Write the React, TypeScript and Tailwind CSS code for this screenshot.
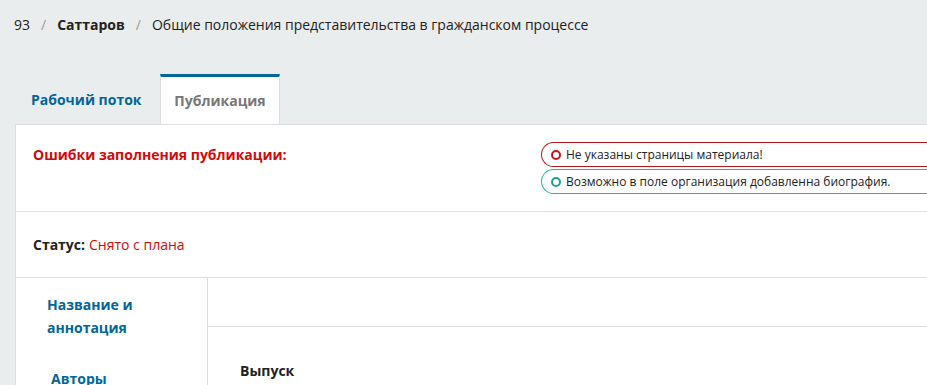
import React from 'react';

const Ring: React.FC<{ color: string }> = ({ color }) => (
  <span className={`inline-block w-[10px] h-[10px] rounded-full border-[2.5px] ${color} shrink-0`} />
);

export default function App() {
  return (
    <div className="min-h-screen overflow-hidden bg-[#eaedee] font-['Open_Sans',sans-serif] text-[14px] text-[#222]">
      {/* breadcrumb */}
      <div className="flex items-center h-[20px] mt-[14px] pl-[14px] whitespace-nowrap">
        <span>93</span>
        <span className="mx-[11px] text-[#999]">/</span>
        <span className="font-bold">Саттаров</span>
        <span className="mx-[11px] text-[#999]">/</span>
        <span>Общие положения представительства в гражданском процессе</span>
      </div>

      {/* tabs */}
      <div className="flex mt-[40px] pl-[16px] w-[1000px]">
        <div className="h-[50px] flex items-center px-[15px] w-[144px] font-bold text-[#006798]">Рабочий поток</div>
        <div className="h-[50px] w-[120px] flex items-center justify-center bg-white border-t-[3px] border-[#006798] border-x border-x-[#ddd] font-bold text-[#777] -mb-px relative">
          Публикация
        </div>
      </div>

      {/* panel */}
      <div className="ml-[15px] w-[1000px] bg-white border-l border-t border-[#ddd]">
        {/* errors */}
        <div className="flex h-[87px] border-b border-[#ddd]">
          <div className="w-[525px] pl-[17px] pt-[20px] font-bold text-[#d00a0a] leading-[20px]">
            Ошибки заполнения публикации:
          </div>
          <div className="flex flex-col gap-[2px] pt-[17px] flex-1">
            <div className="h-[25px] flex items-center gap-[5px] pl-[9px] rounded-l-full border border-r-0 border-[#b3141b] text-[12px]">
              <Ring color="border-[#c8141b]" />
              <span>Не указаны страницы материала!</span>
            </div>
            <div className="h-[25px] flex items-center gap-[5px] pl-[9px] rounded-l-full border border-r-0 border-[#22b3a1] text-[12px]">
              <Ring color="border-[#1c9f8f]" />
              <span>Возможно в поле организация добавленна биография.</span>
            </div>
          </div>
        </div>

        {/* status */}
        <div className="h-[66px] flex items-center pl-[17px] border-b border-[#ddd]">
          <span className="font-bold">Статус:</span>
          <span className="ml-[4px] text-[#d00a0a]">Снято с плана</span>
        </div>

        {/* body */}
        <div className="flex">
          <div className="w-[192px] border-r border-[#ddd] pl-[31px] pt-[15px] h-[120px]">
            <div className="font-bold text-[#006798] leading-[23px] w-[120px]">Название и аннотация</div>
            <div className="font-bold text-[#006798] leading-[23px] mt-[28px] pl-[4px]">Авторы</div>
          </div>
          <div className="flex-1">
            <div className="h-[49px] border-b border-[#ddd]" />
            <div className="pl-[32px] pt-[34px] font-bold leading-[20px]">Выпуск</div>
          </div>
        </div>
      </div>
    </div>
  );
}
